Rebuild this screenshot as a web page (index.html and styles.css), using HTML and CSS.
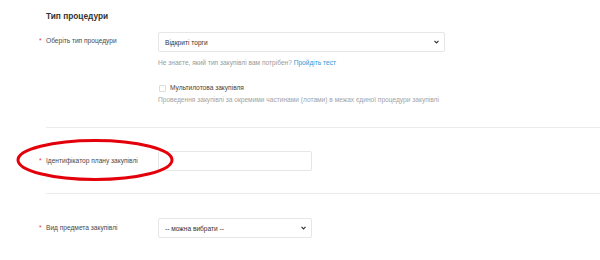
FILE: index.html
```html
<!DOCTYPE html>
<html lang="uk">
<head>
<meta charset="utf-8">
<link rel="stylesheet" href="styles.css">
</head>
<body>
<div class="page">
  <h3 class="title">Тип процедури</h3>

  <div class="row row-first">
    <div class="label"><span class="req">*</span>Оберіть тип процедури</div>
    <div class="field">
      <div class="select select-wide">
        <span>Відкриті торги</span>
        <svg class="chev" width="5" height="4" viewBox="0 0 5 4"><path d="M0.5 0.8 L2.5 2.8 L4.5 0.8" fill="none" stroke="#333" stroke-width="1.2"/></svg>
      </div>
      <div class="hint">Не знаєте, який тип закупівлі вам потрібен? <a class="link">Пройдіть тест</a></div>
      <div class="check"><span class="box"></span><span>Мультилотова закупівля</span></div>
      <div class="desc">Проведення закупівлі за окремими частинами (лотами) в межах єдиної процедури закупівлі</div>
    </div>
  </div>

  <div class="divider div-1"></div>

  <div class="row row-second">
    <div class="label"><span class="req">*</span>Ідентифікатор плану закупівлі</div>
    <div class="field">
      <div class="input"></div>
    </div>
    <svg class="ellipse" width="162" height="46" viewBox="0 0 162 46"><ellipse cx="81" cy="23" rx="77" ry="19.5" fill="none" stroke="#e3000b" stroke-width="3"/></svg>
  </div>

  <div class="divider div-2"></div>

  <div class="row row-third">
    <div class="label"><span class="req">*</span>Вид предмета закупівлі</div>
    <div class="field">
      <div class="select select-narrow">
        <span>-- можна вибрати --</span>
        <svg class="chev" width="5" height="4" viewBox="0 0 5 4"><path d="M0.5 0.8 L2.5 2.8 L4.5 0.8" fill="none" stroke="#333" stroke-width="1.2"/></svg>
      </div>
    </div>
  </div>
</div>
</body>
</html>
```

FILE: styles.css
```css
html, body {
  margin: 0;
  padding: 0;
  background: #ffffff;
}
body {
  font-family: "Liberation Sans", Arial, sans-serif;
  font-size: 6.6px;
  color: #444;
  width: 600px;
  height: 260px;
  overflow: hidden;
}
.page {
  padding-left: 46px;
}
.title {
  margin: 0;
  padding-top: 11px;
  font-size: 8.3px;
  line-height: 11px;
  font-weight: bold;
  color: #333;
}
.row {
  position: relative;
  display: grid;
  grid-template-columns: 112px auto;
  align-items: start;
}
.row-first { margin-top: 10px; }
.row-second { margin-top: 23px; }
.row-third { margin-top: 24px; }
.label {
  line-height: 18px;
  color: #4a4a4a;
  white-space: nowrap;
}
.row-second .label, .row-third .label { line-height: 19px; }
.req {
  display: inline-block;
  width: 7px;
  margin-left: -7px;
  color: #e4393c;
}
.field {
  display: flex;
  flex-direction: column;
}
.select {
  box-sizing: border-box;
  height: 20px;
  border: 1px solid #e6e6e6;
  border-radius: 2px;
  display: flex;
  align-items: center;
  justify-content: space-between;
  padding: 0 5px 0 6px;
  color: #333;
  background: #fff;
}
.select-wide { width: 287px; }
.select-narrow { width: 154px; }
.chev { display: block; }
.hint {
  margin-top: 6px;
  line-height: 10px;
  color: #9a9a9a;
}
.link {
  color: #2b9ad6;
}
.check {
  margin-top: 15px;
  display: flex;
  align-items: center;
  line-height: 10px;
  color: #444;
}
.box {
  box-sizing: border-box;
  width: 7px;
  height: 7px;
  border: 1px solid #dcdcdc;
  border-radius: 1px;
  margin-right: 4px;
  margin-left: 1px;
}
.desc {
  margin-top: 2px;
  line-height: 10px;
  color: #a3a3a3;
}
.divider {
  border-top: 1px solid #ececec;
}
.div-1 { margin-top: 22px; }
.div-2 { margin-top: 22px; }
.input {
  box-sizing: border-box;
  width: 154px;
  height: 20px;
  border: 1px solid #e6e6e6;
  border-radius: 2px;
  background: #fff;
}
.ellipse {
  position: absolute;
  left: -32px;
  top: -14px;
}
```
